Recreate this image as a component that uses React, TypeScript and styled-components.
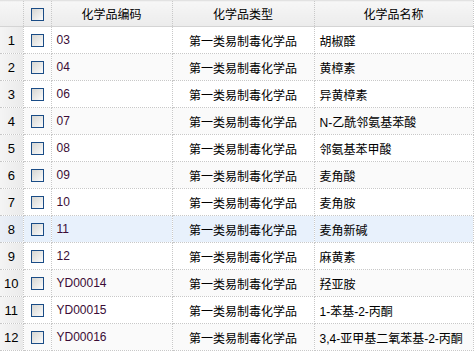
import React, {FC} from "react";
import styled, {createGlobalStyle} from "styled-components";

type Chemical = {
    code: string
    type: string
    name: string
};

const rows: Chemical[] = [
    {code: "03", type: "第一类易制毒化学品", name: "胡椒醛"},
    {code: "04", type: "第一类易制毒化学品", name: "黄樟素"},
    {code: "06", type: "第一类易制毒化学品", name: "异黄樟素"},
    {code: "07", type: "第一类易制毒化学品", name: "N-乙酰邻氨基苯酸"},
    {code: "08", type: "第一类易制毒化学品", name: "邻氨基苯甲酸"},
    {code: "09", type: "第一类易制毒化学品", name: "麦角酸"},
    {code: "10", type: "第一类易制毒化学品", name: "麦角胺"},
    {code: "11", type: "第一类易制毒化学品", name: "麦角新碱"},
    {code: "12", type: "第一类易制毒化学品", name: "麻黄素"},
    {code: "YD00014", type: "第一类易制毒化学品", name: "羟亚胺"},
    {code: "YD00015", type: "第一类易制毒化学品", name: "1-苯基-2-丙酮"},
    {code: "YD00016", type: "第一类易制毒化学品", name: "3,4-亚甲基二氧苯基-2-丙酮"},
];

const SELECTED_ROW = 7;

const GlobalStyle = createGlobalStyle`
  html, body {
    margin: 0;
    padding: 0;
    background: #fff;
  }
  body {
    font-family: "Liberation Sans", "Noto Sans CJK SC", sans-serif;
    font-size: 12px;
    color: #000;
  }
`;

export default function App() {
    return (
        <>
            <GlobalStyle/>
            <Grid>
                <colgroup>
                    <col style={{width: 23}}/>
                    <col style={{width: 28}}/>
                    <col style={{width: 121}}/>
                    <col style={{width: 142}}/>
                    <col style={{width: 159}}/>
                </colgroup>
                <thead>
                <tr>
                    <HeadCell/>
                    <HeadCell><CheckBox/></HeadCell>
                    <HeadCell>化学品编码</HeadCell>
                    <HeadCell>化学品类型</HeadCell>
                    <HeadCell>化学品名称</HeadCell>
                </tr>
                </thead>
                <tbody>
                {rows.map((row, i) => (
                    <GridRow key={row.code} $striped={i % 2 === 1} $selected={i === SELECTED_ROW}>
                        <NumberCell $selected={i === SELECTED_ROW}>{i + 1}</NumberCell>
                        <CheckCell><CheckBox/></CheckCell>
                        <CodeCell>{row.code}</CodeCell>
                        <TypeCell>{row.type}</TypeCell>
                        <NameCell>{row.name}</NameCell>
                    </GridRow>
                ))}
                </tbody>
            </Grid>
        </>
    );
}

const CheckBox: FC = () => <Box/>;

const Grid = styled.table`
  table-layout: fixed;
  border-collapse: collapse;
  width: 473px;
  border-top: 1px solid #e2e2e2;
`;

const HeadCell = styled.th`
  height: 25px;
  padding: 0;
  font-weight: normal;
  text-align: center;
  white-space: nowrap;
  background: linear-gradient(#f7f7f7, #ebebeb);
  border-right: 1px dotted #c8c8c8;
  border-bottom: 1px solid #d4d4d4;
`;

const GridRow = styled.tr<{ $striped: boolean; $selected: boolean }>`
  background: ${p => p.$selected ? "#e8f1fc" : p.$striped ? "#fafafa" : "#fff"};
`;

const Cell = styled.td`
  height: 26px;
  padding: 0 5px;
  white-space: nowrap;
  overflow: hidden;
  border-right: 1px dotted #c8c8c8;
  border-bottom: 1px dotted #c8c8c8;
`;

const NumberCell = styled(Cell)<{ $selected: boolean }>`
  padding: 0;
  text-align: center;
  font-size: 13px;
  background: ${p => p.$selected
    ? "linear-gradient(to right, #eaeff6, #dfe6f0)"
    : "linear-gradient(to right, #f4f4f4, #eaeaea)"};
`;

const CheckCell = styled(Cell)`
  padding: 0;
  text-align: center;
`;

const CodeCell = styled(Cell)`
  color: #3a0c36;
`;

const TypeCell = styled(Cell)`
  text-align: center;
`;

const NameCell = styled(Cell)``;

const Box = styled.span`
  display: inline-block;
  vertical-align: middle;
  width: 11px;
  height: 11px;
  border: 1px solid #1a4c86;
  background: linear-gradient(135deg, #d6d6d2, #fbfbfb);
`;
